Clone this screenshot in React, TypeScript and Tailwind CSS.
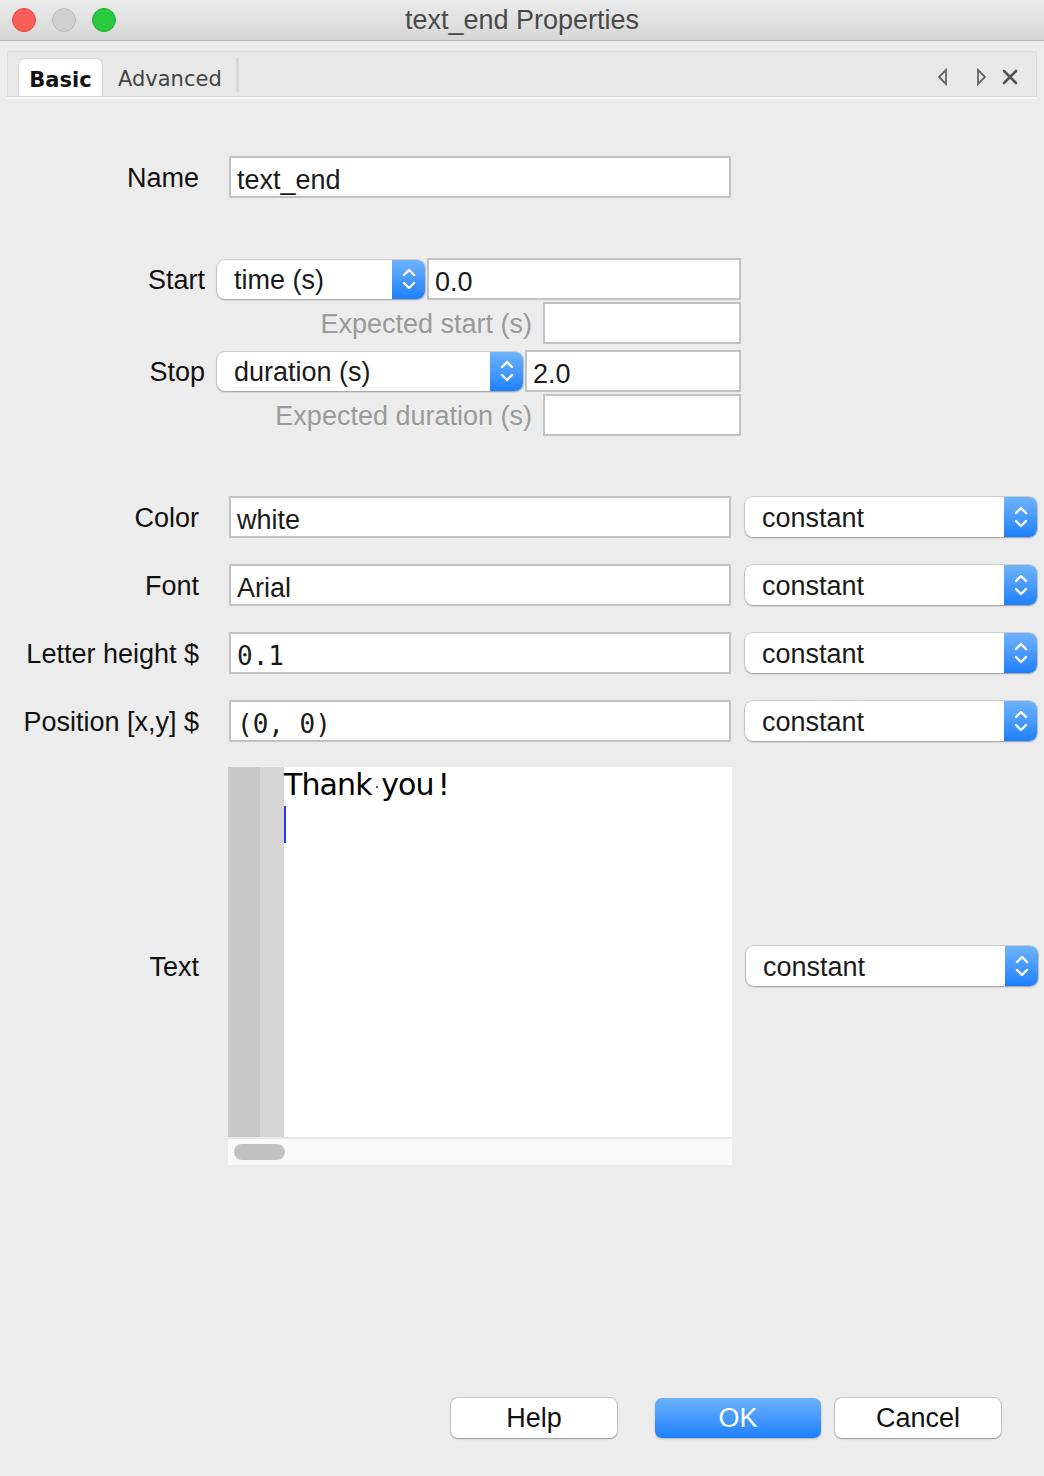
import React from "react";

const SANS = { fontFamily: '"Liberation Sans", Arial, sans-serif' };

function Chevrons() {
  return (
    <svg width="16" height="28" viewBox="0 0 16 28" fill="none" stroke="white" strokeWidth="2.4" strokeLinecap="round" strokeLinejoin="round">
      <path d="M3 10 L8 5 L13 10" />
      <path d="M3 18 L8 23 L13 18" />
    </svg>
  );
}

function Combo({ label, width, height = 40 }: { label: string; width: number; height?: number }) {
  return (
    <div
      className="flex bg-white rounded-[8px] shadow-[0_0_0_1px_rgba(0,0,0,0.12),0_1px_2px_rgba(0,0,0,0.25)] overflow-hidden shrink-0"
      style={{ width, height }}
    >
      <div className="flex-1 flex items-center pl-[17px] pt-[1px] text-[27px] leading-[32px] text-[#1a1a1a]">{label}</div>
      <div className="w-[33px] flex items-center justify-center bg-gradient-to-b from-[#6db3fb] to-[#1a7ffb]">
        <Chevrons />
      </div>
    </div>
  );
}

function Input({ value, width, mono, height = 42 }: { value?: string; width: number; mono?: boolean; height?: number }) {
  return (
    <div
      className="bg-white border-2 border-[#c2c2c2] flex items-center pl-[6px] text-[27px] leading-[32px] text-[#1a1a1a] shrink-0"
      style={{
        width,
        height,
        ...(mono ? { fontFamily: '"DejaVu Sans Mono", monospace', fontSize: 26 } : {}),
      }}
    >
      <span className="pt-[5px]">{value}</span>
    </div>
  );
}

function Label({ children }: { children: React.ReactNode }) {
  return <div className="w-[199px] text-right text-[27px] leading-[34px] text-[#111] shrink-0 whitespace-nowrap pt-[2px]">{children}</div>;
}

function PropRow({ label, value, mono, top }: { label: string; value: string; mono?: boolean; top: number }) {
  return (
    <div className="flex items-center h-[42px]" style={{ marginTop: top }}>
      <Label>{label}</Label>
      <div className="ml-[30px]">
        <Input value={value} width={502} mono={mono} />
      </div>
      <div className="ml-[14px]">
        <Combo label="constant" width={292} />
      </div>
    </div>
  );
}

export default function App() {
  return (
    <div className="w-[1044px] h-[1476px] bg-[#ececec] flex flex-col relative overflow-hidden" style={SANS}>
      {/* Title bar */}
      <div className="h-[41px] shrink-0 bg-gradient-to-b from-[#ebebeb] to-[#d6d6d6] border-b border-[#b9b9b9] flex items-center relative">
        <div className="flex items-center gap-[16px] pl-[12px]">
          <div className="w-[24px] h-[24px] rounded-full bg-[#fc5f57] border border-[#e0443e]" />
          <div className="w-[24px] h-[24px] rounded-full bg-[#d0d0d0] border border-[#bcbcbc]" />
          <div className="w-[24px] h-[24px] rounded-full bg-[#2ac940] border border-[#1fae2d]" />
        </div>
        <div className="absolute inset-0 flex items-center justify-center text-[27px] text-[#4a4a4a]">text_end Properties</div>
      </div>

      {/* Tab bar */}
      <div className="mx-[7px] mt-[10px] h-[45px] bg-[#e8e8e8] border-t border-x border-[#dedede] rounded-t-[3px] flex items-end relative" style={{ fontFamily: '"DejaVu Sans", sans-serif' }}>
        <div className="ml-[10px] w-[85px] h-[38px] bg-white rounded-t-[7px] border border-b-0 border-[#d6d6d6] flex items-center justify-center pt-[6px] text-[21px] font-bold text-[#111]">
          Basic
        </div>
        <div className="ml-[15px] h-[38px] flex items-center pt-[6px] text-[21px] text-[#444]">Advanced</div>
        <div className="ml-[14px] mb-[4px] w-[3px] h-[34px] bg-[#dadada]" />
        <div className="flex-1" />
        <div className="flex items-center mb-[2px] mr-[17px] h-[34px]">
          <svg width="16" height="20" viewBox="0 0 16 20" fill="none" stroke="#666" strokeWidth="1.8">
            <path d="M11 3 L4 10 L11 17 Z" />
          </svg>
          <div className="w-[22px]" />
          <svg width="16" height="20" viewBox="0 0 16 20" fill="none" stroke="#666" strokeWidth="1.8">
            <path d="M5 3 L12 10 L5 17 Z" />
          </svg>
          <div className="w-[12px]" />
          <svg width="18" height="18" viewBox="0 0 18 18" fill="none" stroke="#555" strokeWidth="2.6" strokeLinecap="round">
            <path d="M3 3 L15 15 M15 3 L3 15" />
          </svg>
        </div>
      </div>
      <div className="mx-[7px] h-[3px] bg-[#fafafa] border-t border-[#d8d8d8]" />

      {/* Form */}
      <div className="flex flex-col">
        {/* Name */}
        <div className="flex items-center h-[42px] mt-[57px]">
          <Label>Name</Label>
          <div className="ml-[30px]">
            <Input value="text_end" width={502} />
          </div>
        </div>

        {/* Start / Stop */}
        <div className="flex flex-col mt-[60px]">
          <div className="flex items-center h-[42px]">
            <div className="w-[205px] text-right text-[27px] leading-[34px] text-[#111] pt-[1px]">Start</div>
            <div className="ml-[12px]">
              <Combo label="time (s)" width={208} height={39} />
            </div>
            <div className="ml-[2px]">
              <Input value="0.0" width={314} />
            </div>
          </div>
          <div className="flex items-center h-[42px] mt-[2px]">
            <div className="w-[532px] text-right text-[27px] leading-[34px] text-[#9a9a9a] pt-[2px]">Expected start (s)</div>
            <div className="ml-[11px]">
              <Input width={198} />
            </div>
          </div>
          <div className="flex items-center h-[42px] mt-[6px]">
            <div className="w-[205px] text-right text-[27px] leading-[34px] text-[#111] pt-[1px]">Stop</div>
            <div className="ml-[12px]">
              <Combo label="duration (s)" width={306} height={39} />
            </div>
            <div className="ml-[2px]">
              <Input value="2.0" width={216} />
            </div>
          </div>
          <div className="flex items-center h-[42px] mt-[2px]">
            <div className="w-[532px] text-right text-[27px] leading-[34px] text-[#9a9a9a] pt-[2px]">Expected duration (s)</div>
            <div className="ml-[11px]">
              <Input width={198} />
            </div>
          </div>
        </div>

        <PropRow label="Color" value="white" top={60} />
        <PropRow label="Font" value="Arial" top={26} />
        <PropRow label="Letter height $" value="0.1" mono top={26} />
        <PropRow label="Position [x,y] $" value="(0, 0)" mono top={26} />

        {/* Text editor */}
        <div className="flex items-center mt-[25px]">
          <Label>Text</Label>
          <div className="ml-[29px] w-[504px] h-[398px] flex flex-col">
            <div className="flex-1 flex bg-white">
              <div className="w-[32px] bg-[#c8c8c8]" />
              <div className="w-[24px] bg-[#d5d5d5]" />
              <div className="flex-1 flex flex-col">
                <div className="text-[30px] text-black leading-[36px]" style={{ fontFamily: '"DejaVu Sans", sans-serif', letterSpacing: "-0.9px" }}>
                  Thank<span className="text-[14px] align-middle mx-[3px]">·</span>you<span className="ml-[4px]">!</span>
                </div>
                <div className="w-[2px] h-[37px] bg-[#1f3bff] mt-[1px]" />
              </div>
            </div>
            <div className="h-[2px] bg-[#e6e6e6]" />
            <div className="h-[26px] bg-[#f9f9f9] flex items-center pl-[6px]">
              <div className="w-[51px] h-[16px] rounded-full bg-[#c1c1c1]" />
            </div>
          </div>
          <div className="ml-[14px]">
            <Combo label="constant" width={292} />
          </div>
        </div>

        {/* Buttons */}
        <div className="flex items-center mt-[233px] pl-[451px]">
          <div className="w-[166px] h-[40px] bg-white rounded-[7px] shadow-[0_0_0_1px_rgba(0,0,0,0.14),0_1px_2px_rgba(0,0,0,0.25)] flex items-center justify-center text-[27px] text-[#111]">
            Help
          </div>
          <div className="ml-[38px] w-[166px] h-[40px] rounded-[7px] bg-gradient-to-b from-[#6ab1fb] to-[#1a7ffb] shadow-[0_1px_2px_rgba(0,0,0,0.25)] flex items-center justify-center text-[27px] text-white">
            OK
          </div>
          <div className="ml-[14px] w-[166px] h-[40px] bg-white rounded-[7px] shadow-[0_0_0_1px_rgba(0,0,0,0.14),0_1px_2px_rgba(0,0,0,0.25)] flex items-center justify-center text-[27px] text-[#111]">
            Cancel
          </div>
        </div>
      </div>
    </div>
  );
}
